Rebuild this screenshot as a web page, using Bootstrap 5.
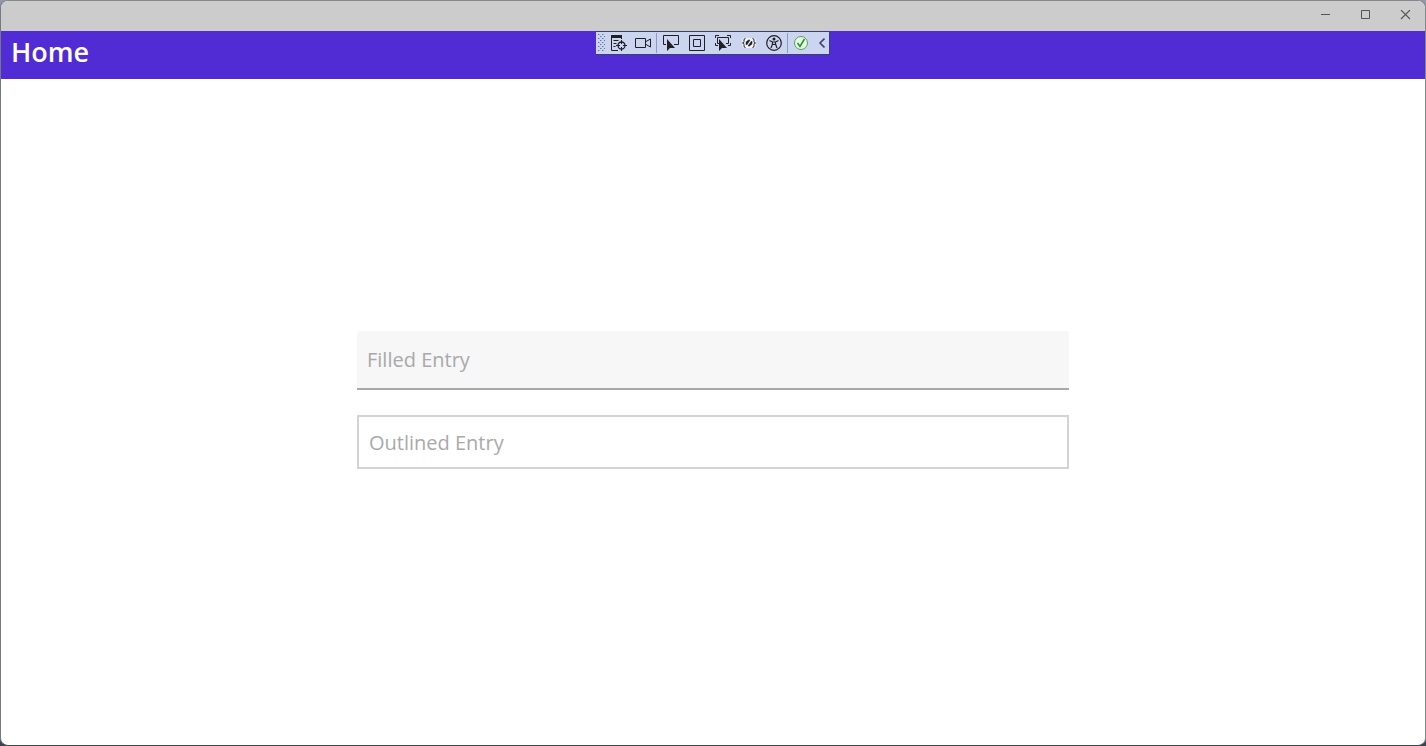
<!DOCTYPE html>
<html lang="en">
<head>
<meta charset="utf-8">
<meta name="viewport" content="width=device-width, initial-scale=1">
<title>Home</title>
<link href="https://cdn.jsdelivr.net/npm/bootstrap@5.3.0/dist/css/bootstrap.min.css" rel="stylesheet">
<style>
body { background: linear-gradient(#9199a8, #3b444e); font-family: "Open Sans", "Noto Sans", sans-serif; }
.app-window { border: 1px solid; border-color: #84868a #84868a #43484e #737980; border-radius: 8px; }
.title-bar { background: #ccc; height: 30px; }
.win-btn { width: 40px; height: 28px; color: #555; }
.app-bar { background: #512bd4; height: 48px; }
.app-title { font-size: 27px; line-height: 42px; font-weight: 600; padding-left: 10px; }
.debug-bar { background: #ccd5f0; border: 1px solid #39406b; border-left: 0; width: 234px; height: 24px; color: #1f1f24; }
.grip { width: 7px; height: 18px; margin: 0 2px; }
.tool { width: 24px; height: 22px; color: inherit; }
.tool-wide { width: 26px; }
.tool-slim { width: 16px; color: #3b4370; }
.rule { width: 1px; height: 20px; background: #8a9bc8; margin: 0 1px; }
.content-area { padding-bottom: 24px; }
.entry-list { gap: 25px; }
.entry { font-size: 20px; line-height: 28px; color: #444; outline-offset: 2px; }
.entry::placeholder { color: #a9a9a9; opacity: 1; }
.entry-filled { height: 59px; padding: 0 10px; background: #f7f7f7; border: 0; border-bottom: 2px solid #a9a9a9; border-radius: 3px 3px 0 0; }
.entry-outlined { height: 54px; padding: 0 10px; background: #fff; border: 2px solid #d3d3d3; }
</style>
</head>
<body>
<div class="app-window d-flex flex-column vh-100 bg-white overflow-hidden">
  <header class="title-bar d-flex justify-content-end">
    <button type="button" class="win-btn btn p-0 border-0 rounded-0 d-flex align-items-center justify-content-center" aria-label="Minimize"><svg width="12" height="10"><path d="M2 4.500h9" stroke="currentColor"/></svg></button>
    <button type="button" class="win-btn btn p-0 border-0 rounded-0 d-flex align-items-center justify-content-center" aria-label="Maximize"><svg width="12" height="10"><path d="M2.500.5h8v8h-8z" fill="none" stroke="currentColor"/></svg></button>
    <button type="button" class="win-btn btn p-0 border-0 rounded-0 d-flex align-items-center justify-content-center" aria-label="Close"><svg width="12" height="10"><path d="M2 0l9 9M11 0l-9 9" stroke="currentColor" stroke-width="1.100"/></svg></button>
  </header>
  <div class="app-bar position-relative text-white">
    <h1 class="app-title m-0">Home</h1>
    <div class="debug-bar position-absolute top-0 start-50 translate-middle-x d-flex align-items-center" role="toolbar" aria-label="Debug tools">
      <svg class="grip flex-shrink-0" viewBox="0 0 7 18"><defs><pattern id="dots" width="4" height="4" patternUnits="userSpaceOnUse"><path d="M0 0h1v1H0zM2 2h1v1H2z" fill="#69749c"/><path d="M1 0h1v1H1zM3 2h1v1H3z" fill="#a5afd0"/></pattern></defs><path d="M0 0h7v18H0z" fill="url(#dots)"/></svg>
      <button type="button" class="tool btn p-0 border-0 rounded-0 d-flex align-items-center justify-content-center flex-shrink-0" aria-label="Live visual tree"><svg width="16" height="16" fill="none" stroke="currentColor"><path d="M0 0h11v3H0z" fill="currentColor" stroke="none"/><path d="M.5 2v13.500H7M10.500 2v2M2.500 5.500h5M2.500 8.500h3M2.500 11.500h2"/><circle cx="10.500" cy="10.500" r="3.500" stroke-width="1.300"/><path d="M10.500 5v4M10.500 12v4M5 10.500h4M12 10.500h4"/></svg></button>
      <button type="button" class="tool btn p-0 border-0 rounded-0 d-flex align-items-center justify-content-center flex-shrink-0" aria-label="Record"><svg width="16" height="16" fill="none" stroke="currentColor"><path d="M.5 3.500h10v9H.5z"/><path d="M11 6.500l4.500-2.500v8L11 9.500"/></svg></button>
      <span class="rule flex-shrink-0"></span>
      <button type="button" class="tool tool-wide btn p-0 border-0 rounded-0 d-flex align-items-center justify-content-center flex-shrink-0" aria-label="Select element"><svg width="16" height="16"><path d="M3 9.500H.5v-9h15v9H11" fill="none" stroke="currentColor"/><path d="M4 4v12l3-3h5z" fill="currentColor"/></svg></button>
      <button type="button" class="tool tool-wide btn p-0 border-0 rounded-0 d-flex align-items-center justify-content-center flex-shrink-0" aria-label="Display layout adorners"><svg width="16" height="16" fill="none" stroke="currentColor"><path d="M.5.5h15v15H.5zM4.500 4.500h7v7h-7z"/></svg></button>
      <button type="button" class="tool tool-wide btn p-0 border-0 rounded-0 d-flex align-items-center justify-content-center flex-shrink-0" aria-label="Track focused element"><svg width="16" height="16"><path d="M.5 3V.5H4M12 .5h3.500V3M.5 8v2.500H3M13 10.500h2.500V8M4 8.500H2.500v-6h11v6H11" fill="none" stroke="currentColor"/><path d="M4 4v12l3-3h5z" fill="currentColor"/></svg></button>
      <button type="button" class="tool tool-wide btn p-0 border-0 rounded-0 d-flex align-items-center justify-content-center flex-shrink-0" aria-label="Binding failures"><svg width="16" height="16" fill="none"><rect x="1" y="3" width="14" height="10" rx="3" fill="#f3f5fb"/><path d="M4.500 3.500Q3 3.500 3 5v1.500Q3 8 1.500 8 3 8 3 9.500V11q0 1.500 1.500 1.500M11.500 3.500Q13 3.500 13 5v1.500Q13 8 14.500 8 13 8 13 9.500V11q0 1.500-1.500 1.500" stroke="currentColor"/><path d="M5 9.500V7l2.500-2H9L6 9.800zM11 6.500V9l-2.500 2H7l3.500-5z" fill="currentColor" stroke="currentColor" stroke-width=".5"/></svg></button>
      <button type="button" class="tool btn p-0 border-0 rounded-0 d-flex align-items-center justify-content-center flex-shrink-0" aria-label="Accessibility checker"><svg width="16" height="16" fill="none" stroke="currentColor"><circle cx="8" cy="8" r="7.300" stroke-width="1.200"/><circle cx="8" cy="4" r="1.500" fill="currentColor" stroke="none"/><path d="M3.500 5.500L6.500 7h3l3-1.500M6.500 7v2L5 13M9.500 7v2l1.500 4M6.500 9.500h3" stroke-width="1.200"/></svg></button>
      <span class="rule flex-shrink-0"></span>
      <button type="button" class="tool btn p-0 border-0 rounded-0 d-flex align-items-center justify-content-center flex-shrink-0" aria-label="Hot reload available"><svg width="16" height="16" fill="none"><circle cx="8" cy="8" r="6.500" fill="#e9f3e8" stroke="#55a457"/><path d="M4.500 8l2.500 3.500L11.500 4" stroke="#17971c" stroke-width="1.500"/></svg></button>
      <button type="button" class="tool tool-slim btn p-0 border-0 rounded-0 d-flex align-items-center justify-content-center flex-shrink-0" aria-label="Collapse toolbar"><svg width="8" height="10" fill="none"><path d="M7.500.5L3 5l4.500 4.500" stroke="currentColor" stroke-width="1.600"/></svg></button>
    </div>
  </div>
  <main class="content-area flex-grow-1 d-flex flex-column justify-content-center align-items-center">
    <form class="entry-list w-50 d-flex flex-column">
      <input type="text" class="entry entry-filled w-100" placeholder="Filled Entry" aria-label="Filled Entry">
      <input type="text" class="entry entry-outlined w-100" placeholder="Outlined Entry" aria-label="Outlined Entry">
    </form>
  </main>
</div>
<script src="https://cdn.jsdelivr.net/npm/bootstrap@5.3.0/dist/js/bootstrap.bundle.min.js"></script>
</body>
</html>
